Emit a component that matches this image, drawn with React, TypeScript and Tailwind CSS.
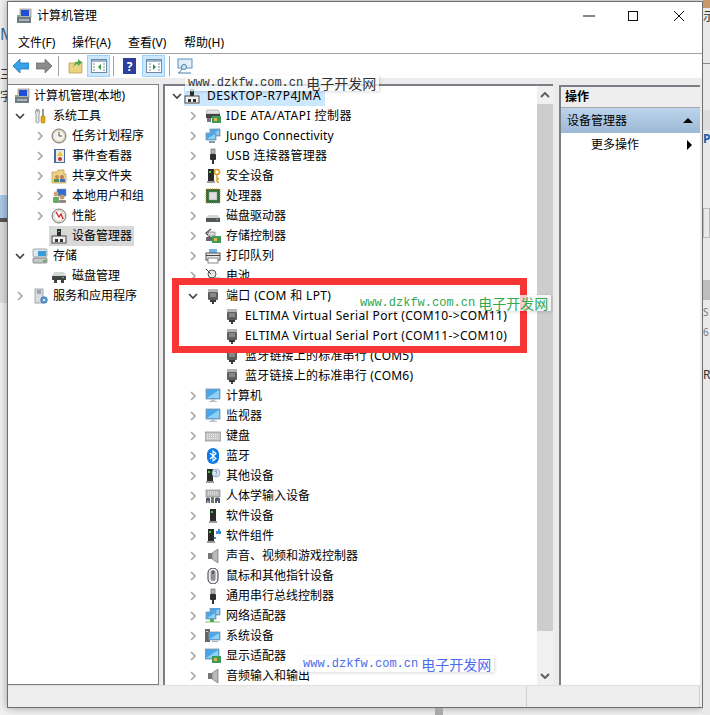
import React from 'react';

const cjk = "font-['Noto_Sans','Noto_Sans_CJK_SC',sans-serif]";

const Tower = ({ x = 0 }: { x?: number }) => (
  <g transform={`translate(${x} 0)`}>
    <rect x="3" y="1" width="6" height="12" fill="#2b2b2b" />
    <rect x="4" y="3" width="2" height="2" fill="#35d335" />
    <rect x="2" y="13" width="8" height="2" fill="#9a9a9a" />
  </g>
);

const Plug = () => (
  <g>
    <rect x="6" y="1" width="4" height="5" fill="#b5b5b5" stroke="#555" strokeWidth="0.6" />
    <rect x="5" y="6" width="6" height="6" rx="1" fill="#2f2f2f" />
    <rect x="7" y="12" width="2" height="4" fill="#333" />
  </g>
);

const Screen = ({ x = 1, y = 2, w = 14, h = 10 }: { x?: number; y?: number; w?: number; h?: number }) => (
  <g>
    <rect x={x} y={y} width={w} height={h} fill="#4aa6ea" stroke="#7f98ad" strokeWidth="0.8" />
    <path d={`M${x + 1} ${y + h - 1}L${x + w - 1} ${y + 1}V${y + h - 1}Z`} fill="#8fd0f7" />
  </g>
);

const Speaker = () => (
  <g>
    <rect x="3" y="5" width="4" height="6" fill="#777" />
    <path d="M7 5L13 1V15L7 11Z" fill="#b9b9b9" stroke="#777" strokeWidth="0.7" />
  </g>
);

const Card = () => (
  <g>
    <rect x="7" y="8" width="9" height="7" fill="#3f9a57" />
    <rect x="9" y="10" width="3" height="3" fill="#d9b650" />
  </g>
);

const DevMgr = () => (
  <g>
    <rect x="6" y="1" width="4" height="7" fill="#2d2d2d" />
    <rect x="7" y="3" width="2" height="1" fill="#4fd04f" />
    <rect x="1" y="8" width="14" height="7" fill="#f2f2f2" stroke="#444" />
    <rect x="4" y="11" width="3" height="3" fill="#333" />
    <rect x="9" y="11" width="3" height="3" fill="#333" />
  </g>
);

const Port = () => (
  <g>
    <rect x="3" y="1" width="10" height="3" fill="#b5b5b5" />
    <rect x="3" y="4" width="10" height="8" rx="1" fill="#5d5d5d" />
    <path d="M5 6H11M5 8H11" stroke="#c9c9c9" strokeWidth="0.8" />
    <rect x="5" y="12" width="6" height="2" fill="#3a3a3a" />
    <rect x="7" y="14" width="2" height="2" fill="#3a3a3a" />
  </g>
);

const icons: Record<string, React.ReactNode> = {
  mgmt: (
    <g>
      <rect x="4" y="1" width="11" height="8" fill="#c9c9c9" stroke="#8a8a8a" strokeWidth="0.7" />
      <rect x="5" y="2" width="8" height="6" fill="#1f4fd8" />
      <rect x="1" y="9" width="14" height="6" fill="#6f7c86" />
      <path d="M3 12H13" stroke="#e8e8e8" />
      <rect x="1" y="7" width="3" height="2" fill="#6fbf6a" />
    </g>
  ),
  tools: (
    <g>
      <path d="M5 1C3 2 3 5 4 6V14C4 15 7 15 7 14V6C8 5 8 2 6 1V4H5Z" fill="#e9e9e9" stroke="#777" strokeWidth="0.7" />
      <rect x="10" y="1" width="2" height="7" fill="#9a9a9a" />
      <rect x="9" y="8" width="4" height="7" rx="1" fill="#e5aa12" stroke="#8f6a06" strokeWidth="0.5" />
    </g>
  ),
  clock: (
    <g>
      <circle cx="8" cy="8" r="7" fill="#d8d3bd" stroke="#777" />
      <circle cx="8" cy="8" r="5" fill="#f6f4ea" />
      <path d="M8 4V8H11" stroke="#555" fill="none" />
    </g>
  ),
  log: (
    <g>
      <rect x="3" y="1" width="11" height="14" fill="#4a6a9c" />
      <rect x="5" y="2" width="8" height="12" fill="#e9e9e9" />
      <path d="M9 3L12 8H6Z" fill="#f0c419" />
      <circle cx="9" cy="11" r="2" fill="#c9342f" />
    </g>
  ),
  share: (
    <g>
      <path d="M1 4H6L7 2H13V6H15V15H1Z" fill="#edd186" stroke="#b79a4b" strokeWidth="0.7" />
      <circle cx="6" cy="9" r="2" fill="#c58a5c" />
      <rect x="3" y="11" width="5" height="3" fill="#4f8f4f" />
      <circle cx="11" cy="9" r="2" fill="#b97b50" />
      <rect x="9" y="11" width="5" height="3" fill="#3f6fb0" />
    </g>
  ),
  users: (
    <g>
      <rect x="6" y="1" width="9" height="7" fill="#2f6fd0" stroke="#7f98ad" strokeWidth="0.5" />
      <circle cx="5" cy="6" r="2.5" fill="#d2a679" />
      <rect x="2" y="9" width="6" height="6" rx="1" fill="#6aa864" />
      <circle cx="11" cy="9" r="2.5" fill="#c99670" />
      <rect x="8" y="12" width="7" height="3" rx="1" fill="#8a8a8a" />
    </g>
  ),
  perf: (
    <g>
      <circle cx="8" cy="8" r="7" fill="#e8e4d6" stroke="#777" />
      <circle cx="8" cy="8" r="5" fill="#fff" stroke="#b9b9b9" strokeWidth="0.5" />
      <path d="M5 4L8 9L10 6L12 11" stroke="#d42020" strokeWidth="1.3" fill="none" />
    </g>
  ),
  devmgr: <DevMgr />,
  storage: (
    <g>
      <rect x="1" y="1" width="14" height="8" rx="1" fill="#dfe7ea" stroke="#7d8d93" strokeWidth="0.7" />
      <rect x="6" y="3" width="8" height="5" fill="#3a9bd8" />
      <rect x="1" y="10" width="14" height="5" rx="1" fill="#c4c8c8" stroke="#6b6b6b" strokeWidth="0.7" />
      <rect x="11" y="12" width="3" height="2" fill="#45c04a" />
    </g>
  ),
  disk: (
    <g>
      <path d="M3 4H13L15 8H1Z" fill="#d5d5d5" />
      <rect x="1" y="8" width="14" height="4" fill="#444" />
      <rect x="11" y="9" width="2" height="1" fill="#48d048" />
      <rect x="3" y="12" width="3" height="3" fill="#444" />
      <rect x="10" y="12" width="3" height="3" fill="#444" />
    </g>
  ),
  service: (
    <g>
      <rect x="3" y="1" width="8" height="14" fill="#d8dde0" stroke="#7f8a90" strokeWidth="0.7" />
      <path d="M5 3H9M5 5H9" stroke="#667" />
      <circle cx="12" cy="12" r="3.3" fill="#5b95cf" stroke="#2f6aa5" strokeWidth="0.6" />
      <circle cx="12" cy="12" r="1.1" fill="#fff" />
    </g>
  ),
  ide: (
    <g>
      <path d="M2 2H13L15 6H1Z" fill="#e2e2e2" stroke="#888" strokeWidth="0.5" />
      <rect x="1" y="6" width="14" height="4" fill="#444" />
      <rect x="2" y="10" width="4" height="4" fill="#777" />
      <Card />
    </g>
  ),
  jungo: (
    <g>
      <Screen x={5} y={1} w={10} h={7} />
      <Screen x={1} y={5} w={10} h={7} />
      <rect x="4" y="13" width="6" height="2" fill="#8a9aa5" />
    </g>
  ),
  usb: <Plug />,
  security: (
    <g>
      <Tower />
      <circle cx="12" cy="4" r="2.5" fill="none" stroke="#d9a520" strokeWidth="1.6" />
      <path d="M12 6V14M12 11H14M12 14H14" stroke="#d9a520" strokeWidth="1.4" />
    </g>
  ),
  cpu: (
    <g>
      <rect x="1" y="1" width="14" height="14" fill="#2f6f3c" stroke="#b98f2a" strokeDasharray="1 1" />
      <rect x="4" y="4" width="8" height="8" fill="#dde0dc" stroke="#999" strokeWidth="0.5" />
    </g>
  ),
  hdd: (
    <g>
      <path d="M3 7H13L15 10H1Z" fill="#d5d5d5" />
      <rect x="1" y="10" width="14" height="4" fill="#555" />
      <rect x="11" y="11" width="2" height="1" fill="#48d048" />
    </g>
  ),
  storagectl: (
    <g>
      <path d="M6 1L1 5L5 9" fill="none" stroke="#444" strokeWidth="1.2" />
      <rect x="3" y="4" width="7" height="4" fill="#dcdcdc" stroke="#666" strokeWidth="0.6" />
      <rect x="1" y="9" width="7" height="4" fill="#666" />
      <Card />
    </g>
  ),
  printer: (
    <g>
      <rect x="4" y="1" width="8" height="4" fill="#6db3e4" />
      <rect x="1" y="5" width="14" height="7" fill="#e8e8e8" stroke="#555" />
      <rect x="3" y="10" width="10" height="5" fill="#fff" stroke="#555" strokeWidth="0.7" />
      <rect x="1" y="7" width="14" height="1" fill="#444" />
    </g>
  ),
  battery: (
    <g>
      <circle cx="7" cy="6" r="4" fill="#e8e8e8" stroke="#555" />
      <path d="M1 1L6 6" stroke="#444" />
      <rect x="4" y="10" width="11" height="5" fill="#55b04f" stroke="#35762f" strokeWidth="0.6" />
    </g>
  ),
  port: <Port />,
  monitor: (
    <g>
      <Screen x={1} y={1} w={14} h={10} />
      <rect x="6" y="11" width="4" height="2" fill="#b8c4cc" />
      <rect x="4" y="13" width="8" height="1" fill="#b8c4cc" />
    </g>
  ),
  keyboard: (
    <g>
      <rect x="0" y="4" width="16" height="9" fill="#c5c5c5" stroke="#7a7a7a" strokeWidth="0.6" />
      <path d="M2 6.5H14M2 8.5H14M2 10.5H14" stroke="#f2f2f2" strokeDasharray="1 1" />
    </g>
  ),
  bluetooth: (
    <g>
      <rect x="2" y="0" width="12" height="16" rx="6" fill="#0a7be8" />
      <path d="M5 5L11 10.5L8 13V3L11 5.5L5 11" stroke="#fff" strokeWidth="1.1" fill="none" />
    </g>
  ),
  other: (
    <g>
      <Tower x={-1} />
      <circle cx="11" cy="5" r="4" fill="#dde9f3" stroke="#7f98ad" strokeWidth="0.7" />
      <path d="M9.5 4C10 2.5 12.5 3 12 4.5C11.7 5.3 11 5.3 11 6.3M11 7V7.8" stroke="#3b6ea5" strokeWidth="0.8" fill="none" />
    </g>
  ),
  hid: (
    <g>
      <rect x="1" y="2" width="14" height="7" fill="#bdbdbd" stroke="#7a7a7a" strokeWidth="0.6" />
      <path d="M3 4H13M3 6H13" stroke="#eee" strokeDasharray="1 1" />
      <path d="M1 15V11C1 9 5 9 5 11V15H3.5V13H2.5V15Z" fill="#4d5a68" />
      <path d="M10 15V11C10 9 15 9 15 11V15H13V13H12V15Z" fill="#4d5a68" />
      <rect x="6" y="9" width="3" height="6" fill="#777" />
    </g>
  ),
  softdev: <Tower x={2} />,
  softcomp: (
    <g>
      <Tower />
      <path d="M11 3H13V1H15V3H16V6H11Z" fill="#3d8fd6" />
      <rect x="9" y="9" width="2" height="2" fill="#3d8fd6" />
    </g>
  ),
  sound: <Speaker />,
  mouse: (
    <g>
      <rect x="3" y="0" width="10" height="16" rx="5" fill="#f0f0f0" stroke="#3a3a3a" />
      <rect x="5.5" y="2" width="5" height="11" rx="2.5" fill="#8b9099" />
      <rect x="7.3" y="3" width="1.4" height="3" fill="#444" />
    </g>
  ),
  netcard: (
    <g>
      <Screen x={5} y={0} w={10} h={7} />
      <Screen x={1} y={4} w={10} h={7} />
      <rect x="0" y="13" width="15" height="2" fill="#bfe0b6" />
      <rect x="5" y="11" width="4" height="3" fill="#46b04a" />
    </g>
  ),
  sysdev: (
    <g>
      <rect x="0" y="1" width="5" height="13" fill="#666" />
      <rect x="1" y="3" width="2" height="1" fill="#ccc" />
      <Screen x={4} y={4} w={11} h={8} />
      <rect x="7" y="13" width="6" height="1" fill="#9fb0bb" />
    </g>
  ),
  display: (
    <g>
      <Screen x={0} y={1} w={14} h={10} />
      <Card />
    </g>
  ),
};

const Icon = ({ name }: { name: string }) => (
  <svg viewBox="0 0 16 16" className="h-4 w-4 shrink-0">
    {icons[name]}
  </svg>
);

const Chevron = ({ open }: { open?: boolean }) => (
  <svg viewBox="0 0 10 10" className="h-[10px] w-[10px] shrink-0">
    {open ? (
      <path d="M1 3L5 7L9 3" fill="none" stroke="#404040" strokeWidth="1.6" />
    ) : (
      <path d="M3 1L7 5L3 9" fill="none" stroke="#a6a6a6" strokeWidth="1.6" />
    )}
  </svg>
);

type Row = { icon: string; label: string; chevron?: 'open' | 'closed'; track?: string };

// tree rows for the middle pane, level 1 has a chevron and level 2 doesn't
const deviceRows: Row[] = [
  { icon: 'ide', label: 'IDE ATA/ATAPI 控制器', chevron: 'closed', track: 'tracking-[0.45px]' },
  { icon: 'jungo', label: 'Jungo Connectivity', chevron: 'closed', track: 'tracking-[0.15px]' },
  { icon: 'usb', label: 'USB 连接器管理器', chevron: 'closed', track: 'tracking-[0.3px]' },
  { icon: 'security', label: '安全设备', chevron: 'closed' },
  { icon: 'cpu', label: '处理器', chevron: 'closed' },
  { icon: 'hdd', label: '磁盘驱动器', chevron: 'closed' },
  { icon: 'storagectl', label: '存储控制器', chevron: 'closed' },
  { icon: 'printer', label: '打印队列', chevron: 'closed' },
  { icon: 'battery', label: '电池', chevron: 'closed' },
  { icon: 'port', label: '端口 (COM 和 LPT)', chevron: 'open', track: 'tracking-[0.35px]' },
  { icon: 'port', label: 'ELTIMA Virtual Serial Port (COM10->COM11)', track: 'tracking-[0.37px]' },
  { icon: 'port', label: 'ELTIMA Virtual Serial Port (COM11->COM10)', track: 'tracking-[0.37px]' },
  { icon: 'port', label: '蓝牙链接上的标准串行 (COM5)', track: 'tracking-[0.2px]' },
  { icon: 'port', label: '蓝牙链接上的标准串行 (COM6)', track: 'tracking-[0.2px]' },
  { icon: 'monitor', label: '计算机', chevron: 'closed' },
  { icon: 'monitor', label: '监视器', chevron: 'closed' },
  { icon: 'keyboard', label: '键盘', chevron: 'closed' },
  { icon: 'bluetooth', label: '蓝牙', chevron: 'closed' },
  { icon: 'other', label: '其他设备', chevron: 'closed' },
  { icon: 'hid', label: '人体学输入设备', chevron: 'closed' },
  { icon: 'softdev', label: '软件设备', chevron: 'closed' },
  { icon: 'softcomp', label: '软件组件', chevron: 'closed' },
  { icon: 'sound', label: '声音、视频和游戏控制器', chevron: 'closed' },
  { icon: 'mouse', label: '鼠标和其他指针设备', chevron: 'closed' },
  { icon: 'usb', label: '通用串行总线控制器', chevron: 'closed' },
  { icon: 'netcard', label: '网络适配器', chevron: 'closed' },
  { icon: 'sysdev', label: '系统设备', chevron: 'closed' },
  { icon: 'display', label: '显示适配器', chevron: 'closed' },
  { icon: 'sound', label: '音频输入和输出', chevron: 'closed' },
];

const DeviceRow = ({ row }: { row: Row }) => (
  <div className="flex h-5 items-center whitespace-nowrap">
    {row.chevron ? (
      <div className="ml-[23px] mr-[7px]">
        <Chevron open={row.chevron === 'open'} />
      </div>
    ) : (
      <div className="w-[59px] shrink-0" />
    )}
    <Icon name={row.icon} />
    <span className={`ml-[5px] text-[12px] text-black ${row.track ?? ''}`}>{row.label}</span>
  </div>
);

const SideChild = ({ icon, label, chevron = true, selected }: { icon: string; label: string; chevron?: boolean; selected?: boolean }) => (
  <div className="flex h-5 items-center whitespace-nowrap pl-[27px]">
    <div className="mr-[4px] w-[10px]">{chevron && <Chevron />}</div>
    <div className={`flex h-5 items-center pr-[2px] ${selected ? 'bg-[#d9d9d9]' : ''}`}>
      <div className="pl-[2px]">
        <Icon name={icon} />
      </div>
      <span className="ml-[5px] text-[12px] text-black">{label}</span>
    </div>
  </div>
);

const SideGroup = ({ icon, label, open }: { icon: string; label: string; open?: boolean }) => (
  <div className="flex h-5 items-center whitespace-nowrap pl-[7px]">
    <Chevron open={open} />
    <div className="ml-[7px]">
      <Icon name={icon} />
    </div>
    <span className="ml-[5px] text-[12px] text-black">{label}</span>
  </div>
);

const ToolSep = ({ className }: { className: string }) => <div className={`h-[20px] w-px bg-[#a0a0a0] ${className}`} />;

const PaneButton = ({ className, flip }: { className: string; flip?: boolean }) => (
  <div className={`flex h-[22px] w-[23px] items-center justify-center border border-[#99d1ff] bg-[#cce8ff] ${className}`}>
    <svg viewBox="0 0 16 14" className="h-[14px] w-4">
      <rect x="0.5" y="0.5" width="15" height="13" fill="#fff" stroke="#6f8aa0" />
      <rect x="1" y="1" width="14" height="2" fill="#9fb4c6" />
      <path d={flip ? 'M3 5H5M3 8H5M3 11H5M12 5H14M12 8H14M12 11H14' : 'M2 5H4M2 8H4M2 11H4M12 5H14M12 8H14M12 11H14'} stroke="#7a8a96" />
      <path d={flip ? 'M7 5L10 8L7 11Z' : 'M10 5L7 8L10 11Z'} fill="#2f9a3c" />
    </svg>
  </div>
);

const Watermark = ({ className, color }: { className: string; color: string }) => (
  <div className={`absolute flex h-4 items-center whitespace-nowrap bg-white/75 px-[3px] shadow-[1px_1px_3px_rgba(0,0,0,0.15)] ${className} ${color}`}>
    <span className="font-['Liberation_Mono',monospace] text-[12px]">www.dzkfw.com.cn</span>
    <span className="ml-[3px] text-[14px]">电子开发网</span>
  </div>
);

export default function App() {
  return (
    <div className={`relative flex h-[715px] w-[710px] overflow-hidden bg-[#f0f0f0] ${cjk}`}>
      {/* what shows of the windows behind */}
      <div className="flex w-[7px] shrink-0 flex-col overflow-hidden bg-[#f0f0f0] text-[#333]">
        <div className="mt-[22px] h-[24px] text-[16px] leading-[24px] text-[#3c6f9c]">M</div>
        <div className="mt-[20px] h-[18px] text-[12px]">三</div>
        <div className="mt-1 h-[20px] text-[12px]">字</div>
        <div className="mt-[87px] h-[23px] bg-[#aac8ea]" />
        <div className="h-1 bg-[#555]" />
        <div className="h-[81px] bg-[#dcdcdc]" />
      </div>

      <div className="mt-px flex h-[707px] w-[696px] shrink-0 flex-col border border-[#6f6f6f] bg-white shadow-[0_0_8px_rgba(0,0,0,0.35)]">
        {/* title bar */}
        <div className="flex h-[30px] shrink-0 items-center pb-[2px]">
          <div className="ml-2">
            <Icon name="mgmt" />
          </div>
          <span className="ml-[5px] text-[12px] text-black">计算机管理</span>
          <svg viewBox="0 0 12 12" className="ml-[486px] h-3 w-3">
            <path d="M0 6H12" stroke="#111" />
          </svg>
          <svg viewBox="0 0 10 10" className="ml-[33px] h-[10px] w-[10px]">
            <rect x="0.5" y="0.5" width="9" height="9" fill="none" stroke="#111" />
          </svg>
          <svg viewBox="0 0 10 10" className="ml-[36px] h-[10px] w-[10px]">
            <path d="M0 0L10 10M10 0L0 10" stroke="#111" />
          </svg>
        </div>

        {/* menu */}
        <div className="flex h-[22px] shrink-0 items-center border-b border-[#a0a0a0] pl-[10px] text-[12px] text-black">
          <span className="w-[54px]">文件(F)</span>
          <span className="w-[56px]">操作(A)</span>
          <span className="w-[56px]">查看(V)</span>
          <span>帮助(H)</span>
        </div>

        {/* toolbar */}
        <div className="flex h-[24px] shrink-0 items-center">
          <svg viewBox="0 0 16 14" className="ml-[5px] h-[14px] w-4">
            <path d="M0 7L7 0V4H16V10H7V14Z" fill="#36a2e8" stroke="#1f76b8" strokeWidth="0.8" />
          </svg>
          <svg viewBox="0 0 16 14" className="ml-[7px] h-[14px] w-4">
            <path d="M16 7L9 0V4H0V10H9V14Z" fill="#8b8b8b" stroke="#6e6e6e" strokeWidth="0.8" />
          </svg>
          <ToolSep className="ml-[6px]" />
          <svg viewBox="0 0 16 16" className="ml-[9px] h-4 w-4">
            <path d="M1 5H6L7 4H14V15H1Z" fill="#ecd27e" stroke="#b79a4b" strokeWidth="0.7" />
            <path d="M5 10C6 5 8 4 10 4V1L14 4.5L10 8V6C8 6 6 7 5 10Z" fill="#49a84c" />
          </svg>
          <PaneButton className="ml-[3px]" />
          <ToolSep className="ml-[3px]" />
          <svg viewBox="0 0 13 16" className="ml-[9px] h-4 w-[13px]">
            <rect width="13" height="16" fill="#2c3f9e" />
            <text x="6.5" y="12.5" textAnchor="middle" fontSize="12" fontWeight="700" fill="#fff">?</text>
          </svg>
          <PaneButton className="ml-[6px]" flip />
          <ToolSep className="ml-[4px]" />
          <svg viewBox="0 0 16 16" className="ml-[7px] h-4 w-4">
            <rect x="1" y="1" width="14" height="9" fill="#dfeefa" stroke="#5c8fb8" />
            <circle cx="7" cy="9" r="2.5" fill="#cfe6f7" stroke="#4d7fa8" />
            <path d="M5 11L2 15M1 15H14" stroke="#4d7fa8" />
          </svg>
        </div>

        {/* three panes */}
        <div className="flex min-h-0 flex-1 bg-[#ececec] pt-[6px]">
          <div className="w-[151px] shrink-0 border-b border-r border-t border-[#7a7f85] bg-white pt-px">
            <div className="flex h-5 items-center whitespace-nowrap pl-[6px]">
              <Icon name="mgmt" />
              <span className="ml-1 text-[12px] text-black">计算机管理(本地)</span>
            </div>
            <SideGroup icon="tools" label="系统工具" open />
            <SideChild icon="clock" label="任务计划程序" />
            <SideChild icon="log" label="事件查看器" />
            <SideChild icon="share" label="共享文件夹" />
            <SideChild icon="users" label="本地用户和组" />
            <SideChild icon="perf" label="性能" />
            <SideChild icon="devmgr" label="设备管理器" chevron={false} selected />
            <SideGroup icon="storage" label="存储" open />
            <SideChild icon="disk" label="磁盘管理" chevron={false} />
            <SideGroup icon="service" label="服务和应用程序" />
          </div>

          <div className="ml-1 flex w-[390px] shrink-0 border-l-2 border-t-2 border-[#7a7f85] bg-white">
            <div className="min-w-0 flex-1 overflow-hidden">
              <div className="flex h-5 items-center whitespace-nowrap pl-[7px]">
                <Chevron open />
                <div className="ml-[2px] flex h-5 w-[141px] items-center bg-[#cce8ff]">
                  <Icon name="devmgr" />
                  <span className="ml-[7px] text-[12px] tracking-[0.5px] text-black">DESKTOP-R7P4JMA</span>
                </div>
              </div>
              {deviceRows.map((row) => (
                <DeviceRow key={row.label} row={row} />
              ))}
            </div>
            <div className="flex w-4 shrink-0 flex-col bg-[#f0f0f0]">
              <div className="flex h-[18px] items-center justify-center">
                <svg viewBox="0 0 10 6" className="h-[6px] w-[10px]">
                  <path d="M1 5L5 1L9 5" fill="none" stroke="#606060" strokeWidth="2" />
                </svg>
              </div>
              <div className="h-[527px] bg-[#cdcdcd]" />
              <div className="flex-1" />
              <div className="flex h-[18px] items-center justify-center">
                <svg viewBox="0 0 10 6" className="h-[6px] w-[10px]">
                  <path d="M1 1L5 5L9 1" fill="none" stroke="#606060" strokeWidth="2" />
                </svg>
              </div>
            </div>
          </div>

          <div className="ml-[6px] mt-px w-[141px] shrink-0 border-l-2 border-t-2 border-[#7a7f85] bg-white">
            <div className="flex h-[21px] items-center border-b border-[#a9a9a9] bg-[#eeeeee] pl-[4px] text-[12px] font-bold text-black">操作</div>
            <div className="flex h-[25px] items-center justify-between bg-gradient-to-b from-[#bcd4ec] to-[#9db8d6] pl-[6px] pr-[7px] text-[12px] text-black">
              <span>设备管理器</span>
              <svg viewBox="0 0 10 5" className="h-[5px] w-[10px]">
                <path d="M0 5L5 0L10 5Z" fill="#000" />
              </svg>
            </div>
            <div className="flex h-[23px] items-center justify-between pl-[30px] pr-[8px] text-[12px] text-black">
              <span>更多操作</span>
              <svg viewBox="0 0 5 10" className="h-[10px] w-[5px]">
                <path d="M0 0L5 5L0 10Z" fill="#000" />
              </svg>
            </div>
          </div>
        </div>

        {/* status bar */}
        <div className="flex h-[22px] shrink-0 border-t border-[#e0e0e0] bg-[#eeeeee]">
          <div className="w-[519px] border-r border-[#d0d0d0]" />
          <div className="w-[173px] border-r border-[#d0d0d0]" />
        </div>
      </div>

      <div className="flex w-[7px] shrink-0 flex-col overflow-hidden bg-[#e9e9e9] text-[#333]">
        <div className="h-2 bg-[#c9986a]" />
        <div className="h-[18px] text-[12px]">示</div>
        <div className="mt-[37px] h-px bg-[#8a8a8a]" />
        <div className="mt-[46px] h-5 bg-[#dcdcdc]" />
        <div className="h-5 text-[12px] font-bold text-[#1d5fa8]">P</div>
        <div className="mt-[58px] h-[30px] border border-[#bbb]" />
        <div className="mt-[42px] h-5 bg-[#bdbdbd]" />
        <div className="mt-[5px] h-[14px] text-[10px] leading-[14px] text-[#777]">S</div>
        <div className="mt-[6px] h-[14px] text-[10px] leading-[14px] text-[#777]">6</div>
        <div className="mt-[27px] h-5 text-[12px]">R</div>
      </div>

      {/* annotations pasted on top of the screenshot */}
      <div className="absolute left-[172px] top-[278px] h-[75px] w-[355px] border-[7px] border-[#f83535]" />
      <div className="absolute left-[435px] top-[708px] h-[7px] w-2 bg-[#a8a8a8]" />
      <Watermark className="left-[185px] top-[75px]" color="text-[#333]" />
      <Watermark className="left-[357px] top-[295px]" color="text-[#2fa84f]" />
      <Watermark className="left-[300px] top-[656px]" color="text-[#4a6cf0]" />
    </div>
  );
}
